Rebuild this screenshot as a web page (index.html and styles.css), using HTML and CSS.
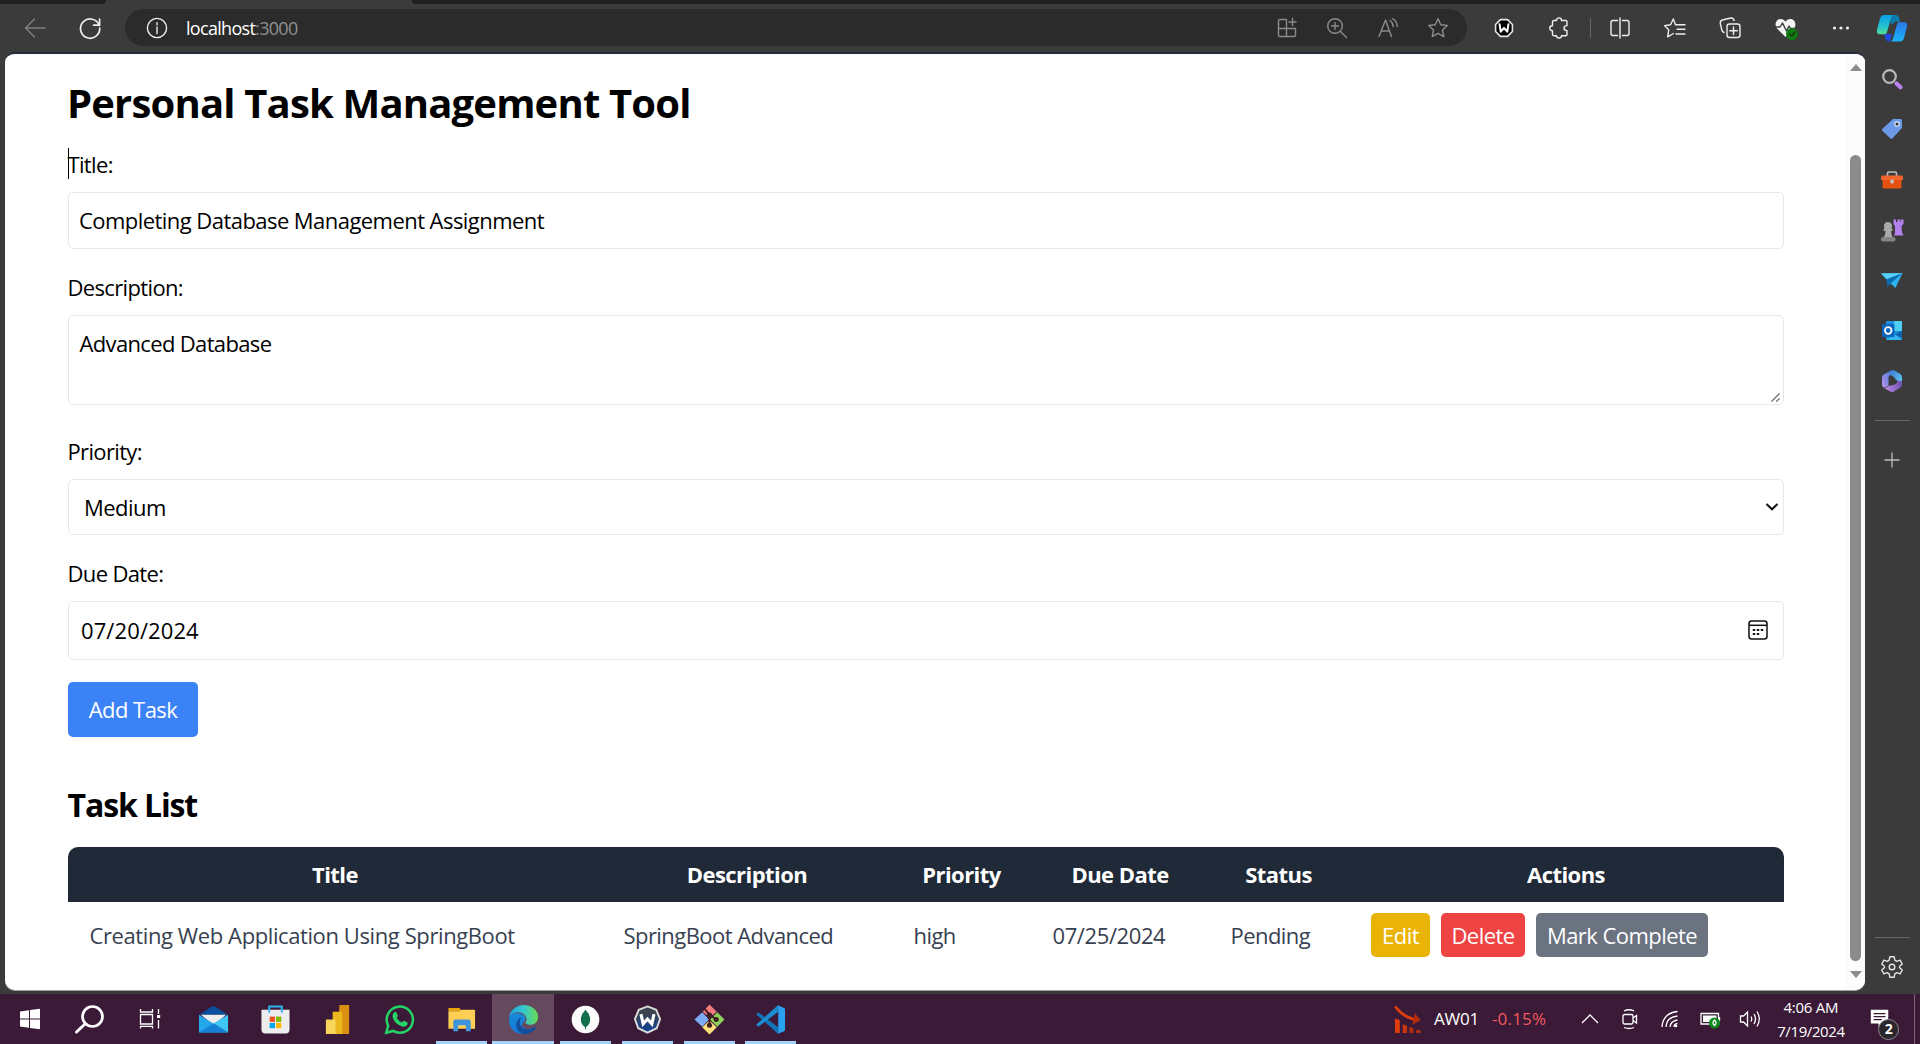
FILE: index.html
```
<!DOCTYPE html>
<html lang="en">
<head>
<meta charset="utf-8">
<title>Personal Task Management Tool</title>
<link rel="stylesheet" href="styles.css">
</head>
<body>
<div class="tabstrip"><i class="tab-gap tab-gap-left"></i><i class="tab-gap tab-gap-right"></i></div>

<header class="toolbar">
  <svg class="ic back" viewBox="0 0 24 24"><path d="M22 12H2.500M11.500 3L2.500 12l9 9"/></svg>
  <svg class="ic reload" viewBox="0 0 24 24"><path d="M21.200 9.500A9.600 9.600 0 1 0 21.700 12M21.600 3.200v6h-6"/></svg>
  <div class="address">
    <svg class="ic info" viewBox="0 0 24 24"><circle cx="12" cy="12" r="9.600"/><path d="M12 11v6.500M12 6.700v2"/></svg>
    <span class="url">localhost<span class="port">:3000</span></span>
    <div class="address-actions">
      <svg class="ic" viewBox="0 0 24 24"><path d="M10.500 3.500H5a1.500 1.500 0 0 0-1.500 1.500v14A1.500 1.500 0 0 0 5 20.500h14a1.500 1.500 0 0 0 1.500-1.500v-6.500h-17M11.500 3.500v17M17.500 2.500v7M14 6h7"/></svg>
      <svg class="ic" viewBox="0 0 24 24"><circle cx="10" cy="10" r="7.300"/><path d="M15.500 15.500l6 6M10 6.500v7M6.500 10h7"/></svg>
      <svg class="ic" viewBox="0 0 24 24"><path d="M3 20.500L9.500 4l6 16.500M5.500 15h8M14 4.500c2 1.300 3 3.200 3.200 6M16.500 2.500c3 1.800 4.600 4.600 4.800 8"/></svg>
      <svg class="ic" viewBox="0 0 24 24"><path d="M12 2.700l2.800 6 6.500.8-4.800 4.500 1.300 6.700-5.800-3.300-5.800 3.300L7.500 14 2.700 9.500l6.500-.8z"/></svg>
    </div>
  </div>
  <div class="toolbar-actions">
    <svg class="ic" viewBox="0 0 24 24"><path fill="#000" stroke="#e8e8e8" stroke-width="1.600" d="M8.500 3.600h7l4.900 4.900v7l-4.900 4.900h-7l-4.900-4.900v-7z"/><path d="M7.500 8.200l1.200 7.500L12 12l3.300 3.700 1.200-7.500" stroke="#fff" stroke-width="2"/></svg>
    <svg class="ic" viewBox="0 0 24 24"><path d="M7 4.500H9.500c0-3.500 5-3.500 5 0h4.300q1.200 0 1.200 1.200v3.900c-4 0-4 5 0 5v3.900q0 1.200-1.200 1.200h-4.300c0 3-5 3-5 0H7q-1.500 0-1.500-1.200v-3.800c-3.700 0-3.700-5 0-5V5.700q0-1.200 1.500-1.200z"/></svg>
    <i class="bar"></i>
    <svg class="ic" viewBox="0 0 24 24"><path d="M9.500 4.500H5A2 2 0 0 0 3 6.500v11a2 2 0 0 0 2 2h4.500M14.500 4.500H19a2 2 0 0 1 2 2v11a2 2 0 0 1-2 2h-4.500M12 2v20"/></svg>
    <svg class="ic" viewBox="0 0 24 24"><path d="M12.500 8.700L10.300 3 7.500 8.700l-6 .9 4.200 4.200-1 7 5.700-3.300M12.500 8.700H22M14 13.300h8M13 18h9"/></svg>
    <svg class="ic" viewBox="0 0 24 24"><rect x="9" y="8" width="13" height="13.500" rx="2.500"/><path d="M15.500 11v7.500M11.800 14.700h7.500M6 16.500c-1.500-.5-2-1.500-2.300-3L2.300 7.500C2 5.500 2.800 4.500 4.300 4l8.500-2c1.800-.3 2.900.7 3.300 2.500"/></svg>
    <svg class="ic" viewBox="0 0 24 24"><path fill="#f4f4f4" stroke="none" d="M11.500 21L3 12.500C0 9 2 3 6.500 3c2.500 0 4 1.300 5 2.800 1-1.500 2.500-2.800 5-2.800C21 3 23 9 20 12.500z"/><path stroke="#3b3b3b" d="M1 11h5l2.500-4 4 8 2.500-5 1.500 2.500h5"/><circle cx="18" cy="18" r="6" fill="#0f7b10" stroke="none"/><path stroke="#15380f" d="M15.500 18l2 2 3.500-4"/></svg>
    <svg class="ic dots" viewBox="0 0 24 24"><circle cx="5.500" cy="12" r="1.600"/><circle cx="12" cy="12" r="1.600"/><circle cx="18.500" cy="12" r="1.600"/></svg>
  </div>
  <svg class="copilot" viewBox="0 0 32 32">
    <defs>
      <linearGradient id="cpA" x1="0" y1="0" x2="0" y2="1"><stop offset="0" stop-color="#0a9fe6"/><stop offset=".6" stop-color="#22c3cf"/><stop offset="1" stop-color="#57dc94"/></linearGradient>
      <linearGradient id="cpB" x1="0" y1="0" x2="0" y2="1"><stop offset="0" stop-color="#2b78e8"/><stop offset="1" stop-color="#18b4fb"/></linearGradient>
    </defs>
    <path fill="#0b7cad" d="M14 3h5.500c2 0 3 1 3.500 2.800l1.200 4h-5L15 13z"/>
    <path fill="#2048df" d="M8 22h8l-2 7.500h-1c-2 0-3-1-3.500-3z"/>
    <path fill="url(#cpA)" d="M8.500 3h9.200c-1.500.5-2.200 1.500-2.700 3l-3.800 13.500C10.500 21.800 9.500 22.300 8 22.300H4C1.300 22.300.5 20.500 1 18L4 6.500C4.700 4 6 3 8.500 3z"/>
    <path fill="url(#cpB)" d="M23.500 29.500h-9.200c1.500-.5 2.200-1.500 2.700-3L20.800 13c.7-2.300 1.700-2.800 3.200-2.800h4c2.700 0 3.500 1.800 3 4.300L28 26c-.7 2.500-2 3.500-4.500 3.500z"/>
  </svg>
</header>

<div class="workspace">
  <main class="page">
    <div class="content">
      <h1>Personal Task Management Tool</h1>
      <form class="task-form">
        <label class="has-caret">Title:</label>
        <div class="field field-title">Completing Database Management Assignment</div>
        <label>Description:</label>
        <div class="field field-description">Advanced Database
          <svg class="grip" viewBox="0 0 10 10"><path d="M.5 9.500l9-9M5.800 9.500l3.700-3.500"/></svg>
        </div>
        <label>Priority:</label>
        <div class="field field-priority">Medium
          <svg class="chevron" viewBox="0 0 14 10"><path d="M1.500 2L7 7.300 12.500 2"/></svg>
        </div>
        <label>Due Date:</label>
        <div class="field field-date">07/20/2024
          <svg class="calendar" viewBox="0 0 20 20"><rect x="1" y="1" width="18" height="18" rx="2.500"/><path d="M1 5.300h18"/><path class="days" d="M4.800 10h2.400M8.800 10h2.400M12.800 10h2.400M4.800 14h2.400M8.800 14h2.400"/></svg>
        </div>
        <button type="button" class="add">Add Task</button>
      </form>
      <h2>Task List</h2>
      <table>
        <colgroup><col class="c-title"><col class="c-desc"><col class="c-prio"><col class="c-due"><col class="c-status"><col class="c-actions"></colgroup>
        <thead><tr><th>Title</th><th>Description</th><th>Priority</th><th>Due Date</th><th>Status</th><th>Actions</th></tr></thead>
        <tbody><tr>
          <td class="loose">Creating Web Application Using SpringBoot</td><td>SpringBoot Advanced</td><td>high</td><td class="loose">07/25/2024</td><td>Pending</td>
          <td><div class="actions"><button type="button" class="edit">Edit</button><button type="button" class="delete">Delete</button><button type="button" class="complete">Mark Complete</button></div></td>
        </tr></tbody>
      </table>
    </div>
    <div class="scrollbar"><i class="arrow up"></i><i class="thumb"></i><i class="arrow down"></i></div>
  </main>

  <aside class="sidebar">
    <div class="side-item"><svg viewBox="0 0 24 24"><circle cx="9.500" cy="9.500" r="6.300" fill="none" stroke="#b9b9b9" stroke-width="2.200"/><path d="M16.500 16.500l4 3.800" stroke="#b982ee" stroke-width="4.200" stroke-linecap="round"/></svg></div>
    <div class="side-item"><svg viewBox="0 0 24 24"><path fill="#6c9ae8" d="M13 2h7.500c1 0 1.500.5 1.500 1.500V11L12.500 21.300c-.7.700-1.500.7-2.200 0L2.500 14c-.7-.7-.7-1.500 0-2.200z"/><circle cx="17" cy="7" r="2.200" fill="#333" stroke="#dfe9ff" stroke-width="1.200"/></svg></div>
    <div class="side-item"><svg viewBox="0 0 24 24"><path d="M7.500 8V5.500q0-1.500 1.500-1.500h6q1.500 0 1.500 1.500V8" fill="none" stroke="#bbb" stroke-width="1.700"/><path fill="#e2510f" d="M2.500 11h19v8.500q0 1-1 1h-17q-1 0-1-1z"/><path fill="#f1662c" d="M1 8.500q0-1 1-1h20q1 0 1 1V12H1z"/><rect x="10.300" y="11.500" width="3.600" height="4" rx="1.500" fill="#c4c4c4"/></svg></div>
    <div class="side-item"><svg viewBox="0 0 24 24"><path fill="#b381ed" d="M13.500 1.500H16V4h1.500V1.500h3V4H21V1.500h2.500V6L21.500 8l.5 6.500 1.500 3h-9.500l1-3L15 8l-1.500-2z"/><path fill="#aaa" d="M8 4a4 4 0 0 1 3.300 6.500h1.200V13H11q0 4 2 6.500H3.500Q5.500 17 5.500 13H3.700v-2.500h1A4 4 0 0 1 8 4z"/><rect x="1" y="19" width="14.500" height="4.500" rx="2" fill="#858585"/></svg></div>
    <div class="side-item"><svg viewBox="0 0 24 24"><path fill="#2cb3ee" d="M1 5.500L22.500 5 15.500 20l-5-4.500z"/><path fill="#0b6cb4" d="M1 5.500l5.500 6.500L7.500 19l3-3.500L22.500 5 7 11z"/><path fill="#57cdf7" d="M1 5.500L22.500 5 6.500 11z"/></svg></div>
    <div class="side-item"><svg viewBox="0 0 24 24"><path fill="#1c8fdb" d="M6 2h15q1 0 1 1v18H6z"/><path fill="#4ccef5" d="M14 2h7q1 0 1 1v9h-8z"/><path fill="#0e62ab" d="M22 11.500V19l-7-3.500z"/><path fill="#35b8f1" d="M6 21l9-5.500 7 5.500z"/><rect x="2" y="5" width="12.500" height="13" rx="1" fill="#0a66bd"/><circle cx="8.200" cy="11.500" r="3.300" fill="none" stroke="#fff" stroke-width="1.800"/></svg></div>
    <div class="side-item"><svg viewBox="0 0 24 24">
      <defs>
        <linearGradient id="msA" x1="0" y1="0" x2="1" y2="1"><stop offset="0" stop-color="#3b6fd0"/><stop offset="1" stop-color="#63d3f8"/></linearGradient>
        <linearGradient id="msB" x1="0" y1="1" x2="1" y2="0"><stop offset="0" stop-color="#c192ee"/><stop offset="1" stop-color="#3a7bd9"/></linearGradient>
        <linearGradient id="msC" x1="0" y1="0" x2="1" y2="0"><stop offset="0" stop-color="#c891ee"/><stop offset="1" stop-color="#6b4fae"/></linearGradient>
      </defs>
      <path fill="url(#msB)" d="M12 1L4 5.200q-2 1.300-2 3.300v7q0 2 1.600 3.200L8.500 17V9q0-2 1.500-3z"/>
      <path fill="url(#msA)" d="M12 1q1-.3 2 .2l6 3.500q2 1.200 2 3.500V14l-6.500-3.500q0-2.500-5.500-4.500Q8.500 4 12 1z"/>
      <path fill="url(#msC)" d="M22 12v4q0 1.800-1.800 2.800l-6.200 3.700q-1.800 1-3.600 0L4 19q3 .3 4.500-2l6.500-1.500q2.500-1 2.500-4z"/>
    </svg></div>
    <hr class="side-rule">
    <div class="side-item side-plus"><svg viewBox="0 0 24 24"><path d="M12 4.500v15M4.500 12h15" stroke="#bdbdbd" stroke-width="1.300"/></svg></div>
    <hr class="side-rule side-rule-low">
    <div class="side-item side-gear"><svg viewBox="0 0 24 24"><path fill="none" stroke="#e3e3e3" stroke-width="1.400" stroke-linejoin="round" d="M9.800 1.800h4.400l.6 3.400 2 1.200 3.300-1.200 2.200 3.800-2.700 2.200v1.600l2.700 2.200-2.200 3.800-3.300-1.200-2 1.200-.6 3.400H9.800l-.6-3.400-2-1.200-3.300 1.200L1.700 15l2.700-2.200v-1.600L1.700 9l2.200-3.800 3.300 1.200 2-1.200z"/><circle cx="12" cy="12" r="2.800" fill="none" stroke="#e3e3e3" stroke-width="1.400"/></svg></div>
  </aside>
</div>

<footer class="taskbar">
  <div class="system">
    <svg viewBox="0 0 32 32"><path fill="#fff" d="M6 8.500l9-1.300v8.300H6zM16 7l10-1.300v9.800H16zM6 16.500h9v8.300l-9-1.300zM16 16.500h10v9.800L16 25z"/></svg>
    <svg viewBox="0 0 32 32"><circle cx="18.500" cy="13.500" r="10" fill="none" stroke="#fff" stroke-width="2.700"/><path d="M11 21l-8.500 8" stroke="#fff" stroke-width="3" stroke-linecap="round"/></svg>
    <svg viewBox="0 0 32 32"><path fill="none" stroke="#fff" stroke-width="1.300" d="M6.500 6v3h12V6M6.500 11.500h12v9.500h-12zM6.500 25.500v-2.200h12v2.200M24.500 6v5M24.500 17v8.500"/><rect x="23" y="12" width="3.200" height="3" fill="#fff"/></svg>
  </div>
  <div class="apps">
    <div class="app"><svg viewBox="0 0 32 32"><path fill="#0a4f9e" d="M1 11L14.500 2.500q1.500-1 3 0L31 11z"/><path fill="#ececec" d="M3 11h26L16 22z"/><path fill="#24a6ea" d="M1 11l30 18.500H1z"/><path fill="#3ec6f5" d="M31 11v18.500L16 20z"/><path fill="#1581d6" d="M1 29.500L16 20l15 9.500z"/></svg></div>
    <div class="app"><svg viewBox="0 0 32 32"><path fill="none" stroke="#2fb4f2" stroke-width="2" d="M9.500 8V2.500h13V8"/><path fill="#ededed" d="M1.500 6h29v20q0 4.500-4 4.500h-21q-4 0-4-4.500z"/><path fill="none" stroke="#2fb4f2" stroke-width="2" d="M9.500 5.500V9M22.500 5.500V9"/><path fill="#f25022" d="M10 13h5.500v5.500H10z"/><path fill="#7fba00" d="M16.500 13H22v5.500h-5.500z"/><path fill="#00a4ef" d="M10 19.500h5.500V25H10z"/><path fill="#ffb900" d="M16.500 19.500H22V25h-5.500z"/></svg></div>
    <div class="app"><svg viewBox="0 0 32 32"><path fill="#d99010" d="M18 1h10v30H16z"/><path fill="#edb81f" d="M11 8h10v23H11z"/><path fill="#f7d65b" d="M4 16h10v15H4z"/></svg></div>
    <div class="app"><svg viewBox="0 0 32 32"><path fill="none" stroke="#25d366" stroke-width="2.600" d="M2.300 29.700l2-7.400A13.500 13.500 0 1 1 9.500 27.800z"/><path fill="#25d366" d="M10.500 8.500q1.500-1 2.300.3l1.400 3q.3 1-1.200 2.500 2 3.500 5.300 4.800 1.700-2 2.500-1.800l3 1.500q1.300.8.200 2.700-1.700 2.500-5 1.800C14 22 9.500 17.500 8.800 13q0-3 1.700-4.500z"/></svg></div>
    <div class="app open"><svg viewBox="0 0 32 32"><path fill="#e5a50e" d="M2.500 4H14l2 3.500H2.500z"/><path fill="#ffcf55" d="M2.500 7.500H14L16 6h13.500q.5 0 .5.500v19H2.500z"/><path fill="#3f95dd" d="M7.500 28V18q0-2 2-2h14q2 0 2 2v10h-5v-6h-8v6z"/></svg></div>
    <div class="app open active"><svg viewBox="0 0 32 32">
      <defs>
        <linearGradient id="edA" x1="0" y1="0" x2="1" y2="0"><stop offset="0" stop-color="#1f9fe0"/><stop offset=".5" stop-color="#35c6d0"/><stop offset="1" stop-color="#69dc50"/></linearGradient>
        <linearGradient id="edB" x1="0" y1="0" x2="0" y2="1"><stop offset="0" stop-color="#1a8bd8"/><stop offset="1" stop-color="#1278d8"/></linearGradient>
      </defs>
      <path fill="url(#edB)" d="M1 16C1 10 7 8.500 11 9.500c6 1.500 7 4 7 6l-4 7 8 6.500q-3 2-7 2C6 30.500 1 24 1 16z"/>
      <path fill="#114f9d" d="M14 14c-3.500 4-2 10 3 11.500 4 1.200 8-.2 11-2q1.500 0 .8 1.500C26 29 21 31 17 31c-7-1-10-8-8-12.500 1-2.500 3-4 5-4.500z"/>
      <path fill="url(#edA)" d="M1 14C2 6 9 1 16 1c9 0 15.500 6 15 13-.3 5-4 7.500-8 7.500-3 0-5.500-1.500-5-3 1-1 1.500-2 1-4C18 11 14.500 8.500 10 8.500c-4 0-7.500 2-9 5.500z"/></svg></div>
    <div class="app open"><svg viewBox="0 0 32 32"><circle cx="16" cy="16" r="14.300" fill="#fbfbfb"/><path fill="#10704b" d="M16 6q4.500 4.500 4.800 9.500T16.500 24v2h-1v-2q-4.500-3.500-4.300-8.500T16 6z"/></svg></div>
    <div class="app open"><svg viewBox="0 0 32 32"><defs><linearGradient id="wsA" x1="0" y1="0" x2="0" y2="1"><stop offset=".3" stop-color="#3c434f"/><stop offset="1" stop-color="#0a409c"/></linearGradient></defs><path fill="url(#wsA)" stroke="#d9dbd6" stroke-width="2" d="M16 2.500l9 3.500 4 9.500L25.500 25 16 29.500 6.500 25 3 15.500 7 6z"/><path fill="none" stroke="#fff" stroke-width="3.200" d="M9.300 10.500l2.200 10 4.500-5 4.500 5 2.200-10"/></svg></div>
    <div class="app open"><svg viewBox="0 0 32 32"><path fill="#f27b7b" d="M16 .5l7.500 7.500L16 14 9 8z"/><path fill="#7faaf6" d="M8.500 8.500L15.500 16 8.500 23.500.5 16z"/><path fill="#8fcf5b" d="M24 8.500l7.500 7.500L24 23.500 16.500 16z"/><path fill="#ffdf7b" d="M16 17l7.500 7-7.500 7.500L8.500 24z"/><path fill="none" stroke="#3a1c22" stroke-width="2" d="M11 5l5 6v11M16 11l7 5"/><g fill="#3a1c22"><circle cx="16" cy="11.500" r="2.600"/><circle cx="23" cy="16" r="2.600"/><circle cx="16" cy="22" r="2.600"/></g></svg></div>
    <div class="app open"><svg viewBox="0 0 32 32"><path fill="#1272b8" d="M1 10.500L3.500 8.500 24 24v7z"/><path fill="#1c8bd2" d="M1 21.500l2.500 2L24 8V1z"/><path fill="#2aa2f1" d="M23 1l7 3q1 .5 1 1.500v21q0 1-1 1.500l-7 3q1-.5 1-2V3q0-1.500-1-2z"/></svg></div>
  </div>
  <div class="ticker">
    <svg viewBox="0 0 30 30"><path d="M2 2.500Q11 14 25 15.500" fill="none" stroke="#dd3c0c" stroke-width="3" stroke-linecap="round"/><path d="M21.500 8.500L27.500 15.500 19 20.500z" fill="#b52d0d"/><path fill="#dd3c0c" d="M1 14l5 1.500V29H1z"/><path fill="#c8370e" d="M9 20l4.500 1.500V29H9z"/><path fill="#b4300e" d="M16 22.500l4 1.500v5h-4zM23 25.500l4.500 1V29H23z"/></svg>
    <span class="symbol">AW01</span><span class="change">-0.15%</span>
  </div>
  <div class="tray">
    <svg viewBox="0 0 24 24"><path d="M4 16l8-8 8 8"/></svg>
    <svg viewBox="0 0 24 24"><rect x="5" y="7.500" width="10" height="9.500" rx="1.500"/><path d="M15 11l3.500-2.500v7.500L15 13.500M6 4q5-2.500 10 0M6 20.500q5 2 10 0"/></svg>
    <svg viewBox="0 0 24 24"><path d="M4 20Q5 6 19.500 4.500M8 20Q8.500 10 19.500 9M12 20q.5-6 7.500-7M16 20q0-3 3.500-3.500"/><circle cx="18" cy="19" r="1.300" class="solid"/></svg>
    <svg viewBox="0 0 24 24"><path d="M3 6.500h17.500V17H3zM21.500 10v4"/><path class="solid" d="M5 8.500h13.500V15H5z"/><circle cx="16.500" cy="16" r="5.500" fill="#0d8a1c" stroke="none"/><path d="M16.500 13q3 3 0 5.500-3-2.500 0-5.500z"/></svg>
    <svg viewBox="0 0 24 24"><path d="M2.500 9h3L9.500 5v14l-4-4h-3zM13 9.500q1.500 2.500 0 5M16 7q3 5 0 10M19 4.500q4.500 7.500 0 15"/></svg>
  </div>
  <div class="clock"><span>4:06 AM</span><span class="date">7/19/2024</span></div>
  <div class="notify"><svg viewBox="0 0 24 24"><path fill="#fff" d="M2 3h19v15h-7l-3.500 4v-4H2z"/><path stroke="#3a1a36" stroke-width="1.300" d="M5 7.200h13M5 10.500h13M5 13.800h9"/></svg><b>2</b></div>
  <i class="desktop-edge"></i>
</footer>
</body>
</html>
```
FILE: styles.css
```
* { box-sizing: border-box; }
body {
  margin: 0;
  width: 1920px;
  height: 1044px;
  overflow: hidden;
  display: flex;
  flex-direction: column;
  background: #3b3b3b;
  color: #000;
  font: 22px/32px "Open Sans", "Noto Sans", sans-serif;
  letter-spacing: -0.55px;
}
svg { display: block; flex: none; overflow: visible; }

/* Browser chrome */
.tabstrip { height: 4px; display: flex; justify-content: space-between; }
.tab-gap { height: 4px; background: #202020; }
.tab-gap-left { width: 106px; border-bottom-right-radius: 5px; }
.tab-gap-right { width: 1508px; border-bottom-left-radius: 5px; }
.toolbar { height: 48px; display: flex; align-items: center; padding: 0 12px 1px 23px; }
.ic { width: 24px; height: 24px; fill: none; stroke: #ededed; stroke-width: 1.4; stroke-linejoin: round; stroke-linecap: round; }
.back { stroke: #808080; margin-right: 31px; }
.reload { stroke-width: 1.7; margin-right: 23px; }
.address {
  width: 1342px;
  height: 37px;
  border-radius: 19px;
  background: #2b2b2b;
  display: flex;
  align-items: center;
  padding: 0 17px 0 20px;
}
.url { margin-left: 17px; font-size: 18px; letter-spacing: -0.7px; color: #fff; }
.port { color: #8f8f8f; }
.address-actions { margin-left: auto; display: flex; gap: 26.300px; }
.address-actions .ic { stroke: #8b8b8b; }
.toolbar-actions { display: flex; align-items: center; margin-left: 25px; gap: 31.400px; }
.toolbar-actions .bar { width: 1px; height: 20px; margin: 0 -14.500px 0 -13px; background: #686868; }
.dots { fill: #ededed; stroke: none; }
.copilot { width: 32px; height: 32px; margin-left: auto; }

.workspace { height: 942px; display: flex; padding-left: 5px; }
.page {
  width: 1860px;
  height: 938px;
  display: flex;
  background: #fff;
  border-top: 2px solid #232c3b;
  border-radius: 10px;
  overflow: hidden;
  box-shadow: 0 1px 0 #9ea59f;
}
.scrollbar {
  width: 19px;
  margin-top: -2px;
  background: #fcfcfc;
  display: flex;
  flex-direction: column;
  align-items: center;
  padding: 12px 0 11px;
}
.arrow { border: 6.500px solid transparent; border-top-width: 0; border-bottom: 7px solid #8b8b8b; }
.arrow.down { border-top: 7px solid #8b8b8b; border-bottom-width: 0; margin-top: 10px; }
.thumb { width: 11px; height: 806px; margin-top: 84px; border-radius: 6px; background: #8b8b8b; }

/* Task page */
.content { width: 1841px; padding: 20px 62px 0 63px; }
h1 { margin: 0 0 16px -1px; font-size: 40px; line-height: 58px; letter-spacing: -0.82px; }
.task-form { display: flex; flex-direction: column; }
label { height: 32px; margin-bottom: 12px; align-self: flex-start; text-indent: -0.5px; letter-spacing: -0.65px; }
.has-caret { height: 31px; margin-bottom: 13px; box-shadow: inset 1px 0 0 #000; }
.field { display: flex; align-items: center; border: 1px solid #e5e7eb; border-radius: 5px; padding: 0 11px 1px 10px; }
.field svg { margin-left: auto; fill: none; stroke: #111; }
.field-title { height: 57px; margin-bottom: 22px; }
.field-description { height: 90px; margin-bottom: 30px; align-items: flex-start; padding: 11px 3px 2px 10.500px; letter-spacing: -0.65px; }
.field .grip { width: 9px; height: 9px; align-self: flex-end; stroke: #555; stroke-width: 1.300; }
.field-priority { height: 56px; margin-bottom: 22px; padding: 0 4px 0 15px; }
.field .chevron { width: 14px; height: 10px; stroke-width: 2; }
.field-date { height: 59px; margin-bottom: 22px; padding: 0 15px 2px 12px; letter-spacing: 0.1px; }
.field .calendar { width: 20px; height: 20px; stroke-width: 1.500; }
.field .days { stroke-width: 2.200; }
button { font: inherit; letter-spacing: inherit; border: 0; border-radius: 5px; color: #fff; padding: 0; }
.add { width: 130px; height: 55px; padding-bottom: 1px; background: #3b82f6; }
h2 { margin: 52px 0 26px -0.5px; font-size: 32px; line-height: 32px; letter-spacing: -1.1px; }
table { width: 1716px; table-layout: fixed; border-spacing: 0; border-radius: 10px 10px 0 0; overflow: hidden; }
.c-title { width: 534px; }
.c-desc { width: 290px; }
.c-prio { width: 139px; }
.c-due { width: 178px; }
.c-status { width: 139px; }
.c-actions { width: 436px; }
thead { background: #1f2937; color: #fff; }
th { height: 55px; padding: 0 0 1px; }
td { height: 66px; padding: 0 0 0 21.500px; color: #374151; }
td.loose { letter-spacing: -0.400px; }
.actions { display: flex; gap: 11px; margin-left: 1.500px; }
.actions button { height: 44px; }
.edit { width: 59px; background: #eab308; }
.delete { width: 84px; background: #ef4444; }
.complete { width: 172px; background: #6b7280; }

/* Edge sidebar */
.sidebar { width: 54px; display: flex; flex-direction: column; align-items: center; padding-top: 2px; }
.side-item { height: 50.300px; display: flex; align-items: center; }
.side-item svg { width: 24px; height: 24px; fill: none; }
.side-rule { width: 35px; height: 1px; border: 0; margin: 14px 0 0; background: #666; }
.side-plus { margin-top: 14px; }
.side-rule-low { margin-top: 452px; }
.side-gear { margin-top: 3px; }

/* Windows taskbar */
.taskbar { height: 50px; background: #3a1a36; display: flex; color: #fff; position: relative; }
.system { display: flex; width: 183px; align-items: center; padding-left: 14px; gap: 28px; }
.system svg { width: 32px; height: 32px; }
.apps { display: flex; }
.app { width: 61.900px; height: 50px; display: flex; align-items: center; justify-content: center; }
.app svg { width: 31px; height: 31px; }
.open { background: linear-gradient(#a5d2fb, #a5d2fb) center bottom / 51px 3px no-repeat; }
.active { background-color: #65495f; background-size: 62px 3px; }
.ticker { display: flex; align-items: center; width: 183px; margin-left: 593px; font-size: 17px; letter-spacing: -0.2px; }
.ticker svg { width: 29px; height: 29px; margin: 0 11px 0 -1px; }
.symbol { width: 58px; }
.change { color: #f2585b; letter-spacing: 0.2px; }
.tray { display: flex; align-items: center; gap: 16px; width: 195px; }
.tray svg { width: 24px; height: 24px; fill: none; stroke: #fff; stroke-width: 1.300; }
.tray .solid { fill: #fff; stroke: none; }
.clock { width: 76px; display: flex; flex-direction: column; align-items: center; padding-top: 1px; font-size: 15px; line-height: 24px; letter-spacing: -0.250px; }
.date { letter-spacing: -0.400px; }
.notify { margin-left: 20px; position: relative; padding-top: 13px; }
.notify b {
  position: absolute;
  left: 9px;
  top: 25px;
  width: 21px;
  height: 21px;
  border: 1.500px solid #8f8a8f;
  border-radius: 50%;
  background: #2b262b;
  font-size: 14px;
  line-height: 17px;
  text-align: center;
}
.notify svg { width: 22px; height: 22px; }
.desktop-edge { position: absolute; right: 5px; top: 0; width: 1px; height: 50px; background: #7b657a; }
```
